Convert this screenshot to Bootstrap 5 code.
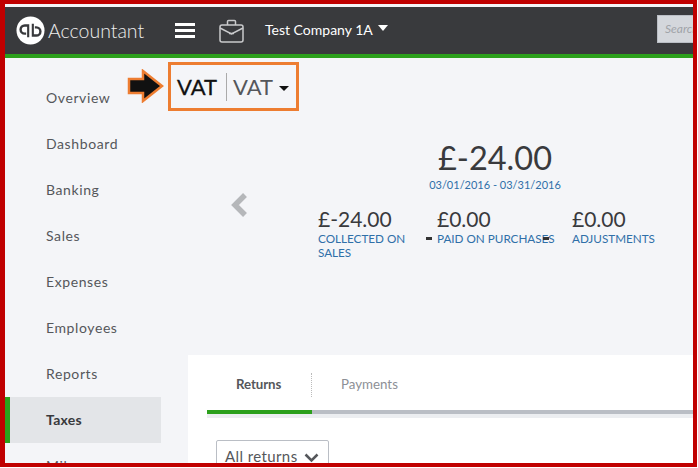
<!DOCTYPE html>
<html lang="en">
<head>
  <meta charset="UTF-8">
  <meta name="viewport" content="width=device-width, initial-scale=1.0">
  <title>VAT</title>
  <link href="https://cdn.jsdelivr.net/npm/bootstrap@5.3.0/dist/css/bootstrap.min.css" rel="stylesheet">
  <style>
    html, body { height: 468px; overflow: hidden; background: #fff; }
    body { font-family: Lato, "Liberation Sans", sans-serif; color: #393a3d; }
    .shot-frame { width: 697px; height: 467px; overflow: hidden; border: solid #c00000; border-width: 4px 4px 4px 5px; }
    .shot-inner { height: 100%; overflow: hidden; background: #f4f5f8; padding-top: 3px; }
    .qb-top { height: 51px; background: #393a3d; border-bottom: 4px solid #2ca01c; color: #fff; padding-left: 11px; }
    .qb-logo { width: 29px; height: 29px; }
    .qb-name { font-size: 19.500px; font-weight: 300; color: #eee; margin-left: 3px; width: 127px; }
    .qb-burger { width: 20px; margin-right: 24px; }
    .qb-burger span { display: block; height: 3px; background: #fff; margin: 3px 0; }
    .qb-company { font-size: 14px; margin-left: 21px; margin-top: -2px; white-space: nowrap; }
    .qb-caret { display: inline-block; border: 5px solid transparent; border-top: 6px solid #fff; border-bottom: 0; margin-left: 5px; vertical-align: 4px; }
    .qb-search { margin-left: auto; width: 36px; height: 28px; background: #d4d7dc; border: 1px solid #babec5; border-right: 0; color: #a0a3a8; font-size: 12px; font-style: italic; padding: 4px 7px; overflow: hidden; margin-top: -4px; }
    .side-col { width: 156px; flex: none; padding-top: 17px; }
    .side-item { height: 46px; padding-left: 41px; line-height: 46px; font-size: 14px; letter-spacing: .6px; color: #55575b; }
    .side-active { background: #e3e5e8; border-left: 5px solid #2ca01c; padding-left: 36px; color: #393a3d; font-weight: 700; letter-spacing: .3px; }
    .main-col { flex: 1; min-width: 0; }
    .vat-row { height: 53px; padding-top: 4px; }
    .vat-box { width: 131px; height: 49px; border: 3px solid #ed7d31; margin-left: 7px; padding-left: 6px; font-size: 22px; white-space: nowrap; }
    .vat-box b { font-weight: 400; color: #111; -webkit-text-stroke: .3px #111; }
    .vat-sep { width: 1px; height: 28px; background: #aaa; margin: 0 6px 0 9px; }
    .vat-light { color: #55575b; }
    .vat-caret { border: 5px solid transparent; border-top: 5px solid #111; border-bottom: 0; margin: 4px 0 0 6px; }
    .vat-arrow { position: absolute; left: 127px; top: 69px; }
    .sum-area { height: 244px; }
    .sum-chevron { position: absolute; left: 69px; top: 82px; width: 18px; height: 24px; }
    .sum-total { text-align: center; padding-left: 173px; padding-top: 27px; width: 495px; }
    .sum-big { font-size: 32.500px; line-height: 40px; color: #393a3d; }
    .sum-link { font-size: 11px; color: #2f6fa8; line-height: 13px; }
    .sum-cols { position: relative; padding-left: 157px; margin-top: 17px; }
    .sum-col { font-size: 11.700px; color: #2f6fa8; line-height: 14px; }
    .sum-col strong { display: block; font-weight: 400; font-size: 21px; line-height: 22px; margin-bottom: 1px; color: #393a3d; }
    .sum-a { width: 107px; padding-right: 12px; }
    .sum-b { width: 147px; padding-left: 12px; white-space: nowrap; }
    .sum-c { width: 120px; }
    .sum-minus { position: absolute; top: 29px; width: 6px; height: 3px; background: #333; }
    .sum-minus-a { left: 265px; }
    .sum-minus-b { left: 382px; }
    .tab-panel { margin-left: 27px; background: #fff; height: 120px; padding: 0 0 0 19px; }
    .tab-row { height: 59px; border-bottom: 4px solid #babec5; box-shadow: 0 4px 0 #eceef1; font-size: 13.300px; }
    .tab-on { width: 105px; height: 59px; border-bottom: 4px solid #2ca01c; padding: 20px 0 0 29px; font-weight: 700; color: #55575b; letter-spacing: -.1px; position: relative; }
    .tab-on::after { content: ""; position: absolute; right: 0; top: 18px; height: 24px; border-right: 1px dotted #bbb; }
    .tab-off { padding: 20px 0 0 29px; color: #8d9096; }
    .ret-select { width: 113px; height: 34px; margin: 26px 0 0 9px; border: 1px solid #babec5; border-radius: 2px; font-size: 15px; line-height: 20px; padding: 5px 8px; color: #55575b; letter-spacing: .4px; white-space: nowrap; }
    .ret-chev { width: 15px; height: 10px; margin-left: 6px; }
  </style>
</head>
<body>
  <div class="shot-frame">
    <div class="shot-inner">
      <!-- Barra superior -->
      <div class="qb-top d-flex align-items-center">
        <svg class="qb-logo" viewBox="0 0 30 30">
          <circle cx="15" cy="15" r="14.500" fill="#fff"/>
          <path d="M12 9.500H9.500a5.500 5.500 0 0 0 0 11H11V18H9.500a3 3 0 0 1 0-6H12v11h2.200V9.500z" fill="#393a3d" transform="translate(-.5 -1)"/>
          <path d="M18 20.500h2.500a5.500 5.500 0 0 0 0-11H19V12h1.500a3 3 0 0 1 0 6H18V7h-2.200v13.500z" fill="#393a3d" transform="translate(.5 1)"/>
        </svg>
        <div class="qb-name">Accountant</div>
        <div class="qb-burger"><span></span><span></span><span></span></div>
        <svg width="25" height="24" viewBox="0 0 25 24" fill="none" stroke="#c9cacc" stroke-width="1.500">
          <rect x="1" y="6" width="23" height="17" rx="2"/>
          <path d="M8.500 6V2.500a1 1 0 0 1 1-1h6a1 1 0 0 1 1 1V6M1 9l11.500 6L24 9"/>
          <path d="M10 14.500h5"/>
        </svg>
        <div class="qb-company">Test Company 1A<span class="qb-caret"></span></div>
        <div class="qb-search">Search</div>
      </div>

      <div class="d-flex">
        <!-- Menu lateral -->
        <div class="side-col">
          <div class="side-item">Overview</div>
          <div class="side-item">Dashboard</div>
          <div class="side-item">Banking</div>
          <div class="side-item">Sales</div>
          <div class="side-item">Expenses</div>
          <div class="side-item">Employees</div>
          <div class="side-item">Reports</div>
          <div class="side-item side-active">Taxes</div>
          <div class="side-item">Mileage</div>
        </div>

        <div class="main-col">
          <div class="vat-row d-flex">
            <div class="vat-box d-flex align-items-center">
              <b>VAT</b><span class="vat-sep"></span><span class="vat-light">VAT</span><span class="vat-caret"></span>
            </div>
          </div>

          <div class="sum-area position-relative">
            <svg class="sum-chevron" viewBox="0 0 18 24"><path d="M15 2 5 12l10 10" fill="none" stroke="#b5b7ba" stroke-width="5.500"/></svg>
            <div class="sum-total">
              <div class="sum-big">£-24.00</div>
              <div class="sum-link">03/01/2016 - 03/31/2016</div>
            </div>
            <div class="sum-cols d-flex">
              <div class="sum-col sum-a"><strong>£-24.00</strong>COLLECTED ON SALES</div>
              <div class="sum-col sum-b"><strong>£0.00</strong>PAID ON PURCHASES</div>
              <div class="sum-col sum-c"><strong>£0.00</strong>ADJUSTMENTS</div>
              <span class="sum-minus sum-minus-a"></span>
              <span class="sum-minus sum-minus-b"></span>
            </div>
          </div>

          <div class="tab-panel">
            <div class="tab-row d-flex">
              <div class="tab-on">Returns</div>
              <div class="tab-off">Payments</div>
            </div>
            <div class="ret-select">All returns<svg class="ret-chev" viewBox="0 0 15 10"><path d="M1.500 1.500 7.500 7.500l6-6" fill="none" stroke="#55575b" stroke-width="2.500"/></svg></div>
          </div>
        </div>
      </div>
    </div>
  </div>
  <svg class="vat-arrow" width="37" height="34" viewBox="0 0 37 34">
    <path d="M2 10h14V2l19 15-19 15v-8H2z" fill="#111" stroke="#ed7d31" stroke-width="2.500"/>
  </svg>
  <script src="https://cdn.jsdelivr.net/npm/bootstrap@5.3.0/dist/js/bootstrap.bundle.min.js"></script>
</body>
</html>
